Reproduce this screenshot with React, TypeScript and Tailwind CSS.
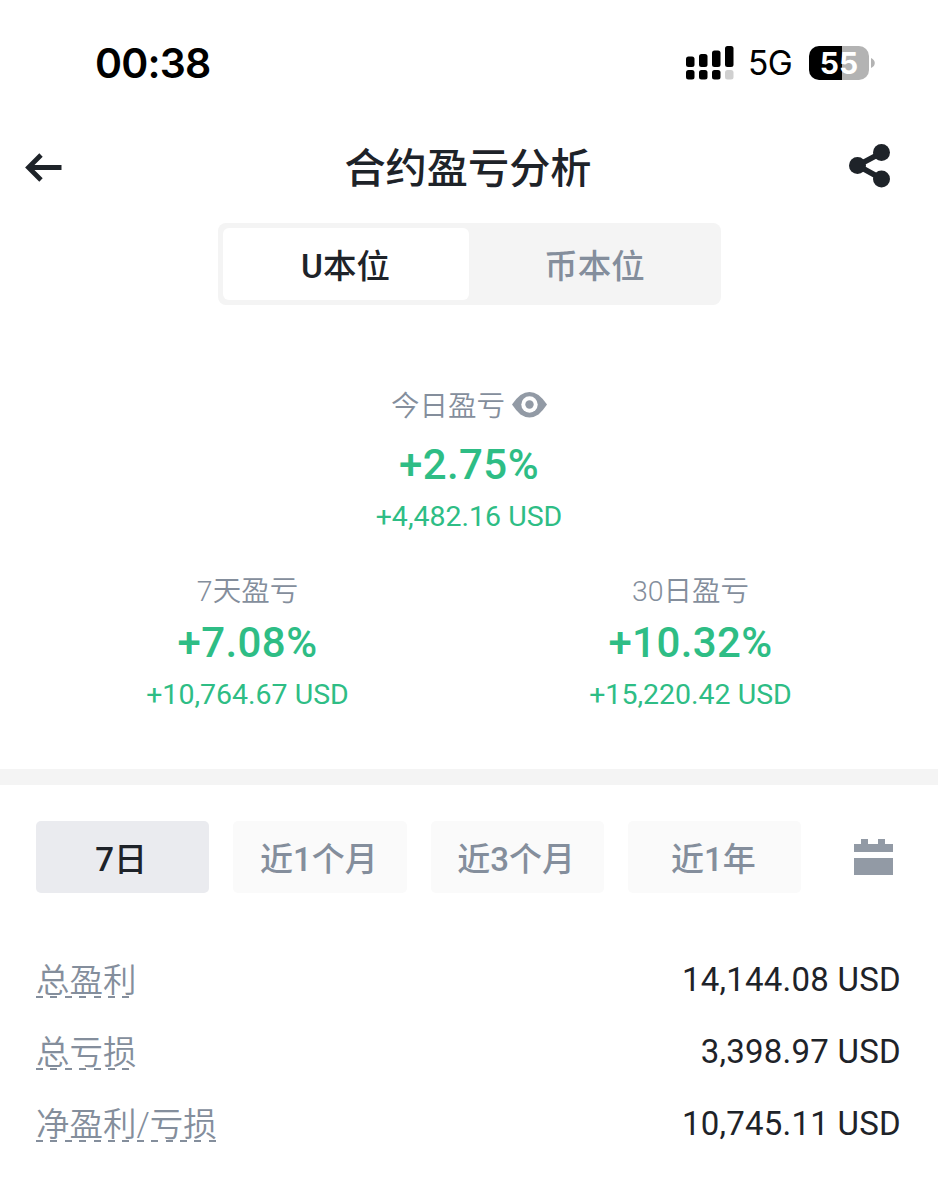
import React from "react";

const ranges = ["7日", "近1个月", "近3个月", "近1年"];

const totals = [
  { label: "总盈利", value: "14,144.08 USD" },
  { label: "总亏损", value: "3,398.97 USD" },
  { label: "净盈利/亏损", value: "10,745.11 USD" },
];

function StatusBar() {
  return (
    <div className="flex h-[126px] items-center justify-between pl-[95px] pr-[63px] font-['Inter',sans-serif] text-black">
      <span className="text-[41px] font-semibold leading-none tracking-[-0.8px]">00:38</span>
      <div className="flex items-center">
        <svg className="h-[34px] w-[48px]" viewBox="0 0 48 34">
          <rect x="0" y="10.500" width="8.500" height="10.500" rx="2.500" />
          <rect x="13" y="8" width="8.500" height="13" rx="2.500" />
          <rect x="26" y="4.500" width="8.500" height="16.500" rx="2.500" />
          <rect x="39" y="0" width="8.500" height="21" rx="2.500" />
          <rect x="0" y="24" width="8.500" height="9.500" rx="2.500" />
          <rect x="13" y="24" width="8.500" height="9.500" rx="2.500" />
          <rect x="26" y="24" width="8.500" height="9.500" rx="2.500" />
          <rect x="39" y="24" width="8.500" height="9.500" rx="2.500" fill="#d0d0d0" />
        </svg>
        <span className="ml-[14px] w-[46px] pt-[2px] text-[33.500px] leading-none tracking-[-0.5px]">5G</span>
        <div className="ml-[15px] flex h-[34px] w-[60px] items-center justify-center rounded-[10px] bg-[linear-gradient(90deg,#000_55%,#b3b3b3_55%)] text-[30px] font-bold leading-none text-white">
          55
        </div>
        <svg className="ml-[2px] h-[10px] w-[4px]" viewBox="0 0 4 10">
          <path d="M0 0C5 2 5 8 0 10Z" fill="#b3b3b3" />
        </svg>
      </div>
    </div>
  );
}

function Header() {
  return (
    <header className="grid h-[82px] grid-cols-[1fr_auto_1fr] items-center pl-[24px] pr-[26px]">
      <svg className="ml-px h-[30px] w-[42px]" viewBox="0 0 42 30" fill="none" stroke="#1e2329" strokeWidth="4.800">
        <path d="M36.500 15.500H4M16 3L3.500 15.500L16 28" />
      </svg>
      <h1 className="pt-[5px] text-[41.200px] font-medium leading-none">合约盈亏分析</h1>
      <svg className="mr-[21px] h-[44px] w-[42px] justify-self-end overflow-visible" viewBox="0 0 42 44" fill="#1e2329">
        <path d="M33 7.500L8.500 20.500L33 34" fill="none" stroke="#1e2329" strokeWidth="5.500" />
        <circle cx="32.500" cy="7.500" r="8.500" />
        <circle cx="8.500" cy="20.500" r="8.500" />
        <circle cx="32.500" cy="34" r="8.500" />
      </svg>
    </header>
  );
}

interface StatProps {
  label: string;
  percent: string;
  amount: string;
  primary?: boolean;
}

function Stat({ label, percent, amount, primary }: StatProps) {
  return (
    <div className="flex flex-col items-center">
      <div className="flex h-[40px] items-center text-[28.500px] font-[350] leading-[40px] text-[#848e9c]">
        <span className="pt-[4px]">{label}</span>
        {primary && (
          <svg className="ml-[7px] h-[26px] w-[35px]" viewBox="0 0 35 26">
            <path d="M0 12.500Q4 6.500 8.500 3Q17.500 -3 26.500 3Q31 6.500 35 12.500Q31 18.500 26.500 22.500Q17.500 28.500 8.500 22.500Q4 18.500 0 12.500Z" fill="#929aa5" />
            <circle cx="17.500" cy="12.500" r="8.200" fill="#fff" />
            <circle cx="17.500" cy="12.500" r="4.200" fill="#929aa5" />
          </svg>
        )}
      </div>
      <div
        className={
          primary
            ? "mt-[15px] text-[42px] font-medium leading-[50px] tracking-[0.4px] text-[#2ebd85]"
            : "mt-[8px] text-[42px] font-medium leading-[50px] tracking-[0.4px] text-[#2ebd85]"
        }
      >
        {percent}
      </div>
      <div className="mt-[9px] text-[28.500px] leading-[36px] text-[#2ebd85]">{amount}</div>
    </div>
  );
}

export default function App() {
  return (
    <main className="h-[1200px] w-[938px] overflow-hidden bg-white font-['Roboto','Noto_Sans_CJK_SC',sans-serif] text-[#1e2329]">
      <StatusBar />
      <Header />

      <div className="mx-auto mt-[15px] flex h-[82px] w-[503px] rounded-[8px] bg-[#f4f4f4] py-[5px] pl-[5px] text-[33.500px] font-medium">
        <button className="w-[246px] rounded-[6px] bg-white pt-[7px]">U本位</button>
        <button className="flex-1 pt-[7px] text-[#848e9c]">币本位</button>
      </div>

      <section className="h-[464px] pt-[80px]">
        <Stat label="今日盈亏" percent="+2.75%" amount="+4,482.16 USD" primary />
        <div className="mt-[35px] grid grid-cols-2 px-[26px]">
          <Stat label="7天盈亏" percent="+7.08%" amount="+10,764.67 USD" />
          <Stat label="30日盈亏" percent="+10.32%" amount="+15,220.42 USD" />
        </div>
      </section>

      <div className="h-[16px] bg-[#f4f4f4]" />

      <section className="px-9 pt-[36px]">
        <div className="flex items-center gap-[24px]">
          {ranges.map((range, i) => (
            <button
              key={range}
              className={
                i === 0
                  ? "h-[72px] w-[173.250px] rounded-[5px] bg-[#eaebef] pr-[3px] pt-[5px] text-[33px] font-medium"
                  : "h-[72px] w-[173.250px] rounded-[5px] bg-[#fafafa] pr-[2px] pt-[5px] text-[33px] font-medium text-[#848e9c]"
              }
            >
              {range}
            </button>
          ))}
          <svg className="ml-[29px] h-[36px] w-[39px]" viewBox="0 0 39 36" fill="#929aa5">
            <path d="M0 5H7V0H14V5H24V0H31V5H39V13H0ZM0 19H39V36H0Z" />
          </svg>
        </div>

        <dl className="mt-[50px]">
          {totals.map((row) => (
            <div key={row.label} className="flex h-[72px] items-center justify-between">
              <dt className="flex flex-col text-[33.500px] font-[350] text-[#848e9c]">
                <span className="h-[35px] leading-[40px]">{row.label}</span>
                <span className="h-[2px] w-full bg-[repeating-linear-gradient(90deg,#848e9c_0_7px,transparent_7px_14.400px)]" />
              </dt>
              <dd className="pr-px pt-[2px] text-[33px] tracking-[0.250px]">{row.value}</dd>
            </div>
          ))}
        </dl>
      </section>
    </main>
  );
}
